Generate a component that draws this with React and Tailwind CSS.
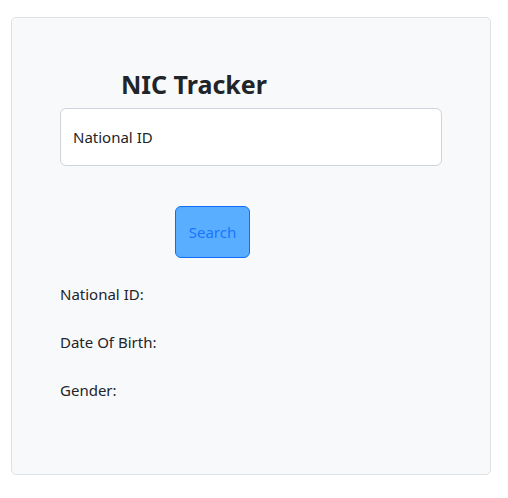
export default function App() {
  return (
    <div className="bg-white w-[508px] h-[498px] pt-[17px] pl-[11px] font-['Noto_Sans',sans-serif] text-[#212529]">
      <div className="w-[480px] h-[458px] bg-[#f8f9fa] border border-[#dee2e6] rounded-[5px] pl-[48px] pt-[48px]">
        <h1 className="ml-[61px] text-[25px] font-bold leading-[36px] h-[42px]">NIC Tracker</h1>
        <div className="w-[382px] h-[58px] bg-white border border-[#ced4da] rounded-[6px] flex items-center px-[12px] text-[15px]">
          National ID
        </div>
        <button className="mt-[40px] ml-[115px] w-[75px] h-[52px] bg-[#5aaeff] border border-[#0d6efd] rounded-[6px] text-[#1a75ff] text-[15px]">
          Search
        </button>
        <div className="mt-[24px] flex flex-col gap-[24px] text-[15px] leading-[24px]">
          <div>National ID:</div>
          <div>Date Of Birth:</div>
          <div>Gender:</div>
        </div>
      </div>
    </div>
  );
}
